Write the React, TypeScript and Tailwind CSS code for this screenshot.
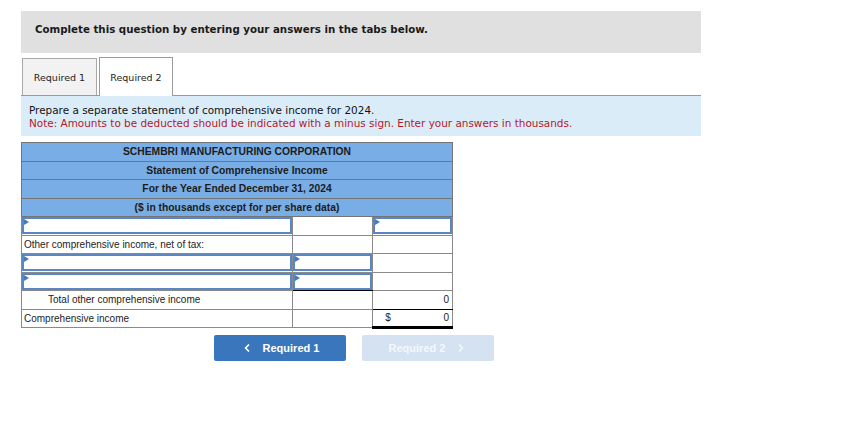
import { ChevronLeft, ChevronRight } from 'lucide-react';

const verdana = { fontFamily: '"DejaVu Sans", Verdana, sans-serif' };

function InputBox() {
    return (
        <div className="relative h-[17px] w-full border-2 border-[#5a86c2] bg-white">
            <span className="absolute top-0 left-0 h-0 w-0 border-t-[3px] border-b-[3px] border-l-[5px] border-t-transparent border-b-transparent border-l-[#4a78bc]" />
        </div>
    );
}

export default function App() {
    return (
        <div className="min-h-screen bg-white px-[21px] pt-[11px] text-black" style={verdana}>
            <div className="w-[680px]">
                <div className="h-[42px] bg-[#e0e0e0] pt-[11px] pl-[14px] text-[10.25px] font-bold text-[#1a1a1a]">
                    Complete this question by entering your answers in the tabs below.
                </div>

                <div className="mt-[6px] flex h-[37px] items-end border-b border-[#9a9a9a]">
                    <div className="ml-px flex h-[37px] w-[75px] items-center justify-center border border-b-0 border-[#a8a8a8] bg-[#f2f2f2] pt-[3px] text-[9.5px] text-[#222]">
                        Required 1
                    </div>
                    <div className="relative -mb-px ml-[2px] flex h-[39px] w-[74px] items-center justify-center border border-b-0 border-[#9a9a9a] bg-white pt-[3px] text-[9.5px] text-[#222]">
                        Required 2
                    </div>
                </div>

                <div className="h-[40px] bg-[#dbecf9] pt-[8px] pl-[8px] text-[10.45px] leading-[13px]">
                    <div className="text-[#111]">Prepare a separate statement of comprehensive income for 2024.</div>
                    <div className="text-[#b5172a]">Note: Amounts to be deducted should be indicated with a minus sign. Enter your answers in thousands.</div>
                </div>
            </div>

            <table
                className="mt-[6px] w-[432px] border-collapse text-[10px] text-[#1c1c1c]"
                style={{ fontFamily: '"Liberation Sans", Arial, sans-serif' }}
            >
                <colgroup>
                    <col className="w-[272px]" />
                    <col className="w-[80px]" />
                    <col className="w-[80px]" />
                </colgroup>
                <tbody>
                    {[
                        'SCHEMBRI MANUFACTURING CORPORATION',
                        'Statement of Comprehensive Income',
                        'For the Year Ended December 31, 2024',
                        '($ in thousands except for per share data)',
                    ].map((t) => (
                        <tr key={t} className="h-[18.5px]">
                            <td colSpan={3} className="border border-[#757575] bg-[#79ade5] p-0 text-center text-[10.3px] font-bold">
                                {t}
                            </td>
                        </tr>
                    ))}
                    <tr className="h-[18.5px]">
                        <td className="border border-[#8a8a8a] p-0"><InputBox /></td>
                        <td className="border border-[#8a8a8a] p-0" />
                        <td className="border border-[#8a8a8a] p-0"><InputBox /></td>
                    </tr>
                    <tr className="h-[18.5px]">
                        <td className="border border-[#8a8a8a] px-[2px] py-0">Other comprehensive income, net of tax:</td>
                        <td className="border border-[#8a8a8a] p-0" />
                        <td className="border border-[#8a8a8a] p-0" />
                    </tr>
                    <tr className="h-[18.5px]">
                        <td className="border border-[#8a8a8a] p-0"><InputBox /></td>
                        <td className="border border-[#8a8a8a] p-0"><InputBox /></td>
                        <td className="border border-[#8a8a8a] p-0" />
                    </tr>
                    <tr className="h-[18.5px]">
                        <td className="border border-[#8a8a8a] p-0"><InputBox /></td>
                        <td className="border border-[#8a8a8a] border-b-black p-0"><InputBox /></td>
                        <td className="border border-[#8a8a8a] p-0" />
                    </tr>
                    <tr className="h-[18.5px]">
                        <td className="border border-[#8a8a8a] py-0 pl-[26px]">Total other comprehensive income</td>
                        <td className="border border-[#8a8a8a] border-t-black p-0" />
                        <td className="border border-[#8a8a8a] border-b-black py-0 pr-[3px] text-right">0</td>
                    </tr>
                    <tr className="h-[18.5px]">
                        <td className="border border-[#8a8a8a] px-[2px] py-0">Comprehensive income</td>
                        <td className="border border-[#8a8a8a] p-0" />
                        <td className="border border-[#8a8a8a] border-b-[3px] border-t-black border-b-black py-0 pr-[3px]">
                            <div className="flex justify-between pl-[12px]">
                                <span>$</span>
                                <span>0</span>
                            </div>
                        </td>
                    </tr>
                </tbody>
            </table>

            <div className="mt-[6px] flex w-[680px] gap-[16px] pl-[193px]" style={{ fontFamily: '"Liberation Sans", Arial, sans-serif' }}>
                <button className="flex h-[26px] w-[132px] items-center justify-center gap-[10px] rounded-[2px] bg-[#3a76bb] text-[11px] font-bold text-white">
                    <ChevronLeft className="h-[12px] w-[12px]" strokeWidth={3.5} />
                    Required 1
                </button>
                <button className="flex h-[26px] w-[132px] items-center justify-center gap-[10px] rounded-[2px] bg-[#d5e2f1] text-[11px] font-bold text-[#f4f8fc]">
                    Required 2
                    <ChevronRight className="h-[12px] w-[12px]" strokeWidth={3.5} />
                </button>
            </div>
        </div>
    );
}
